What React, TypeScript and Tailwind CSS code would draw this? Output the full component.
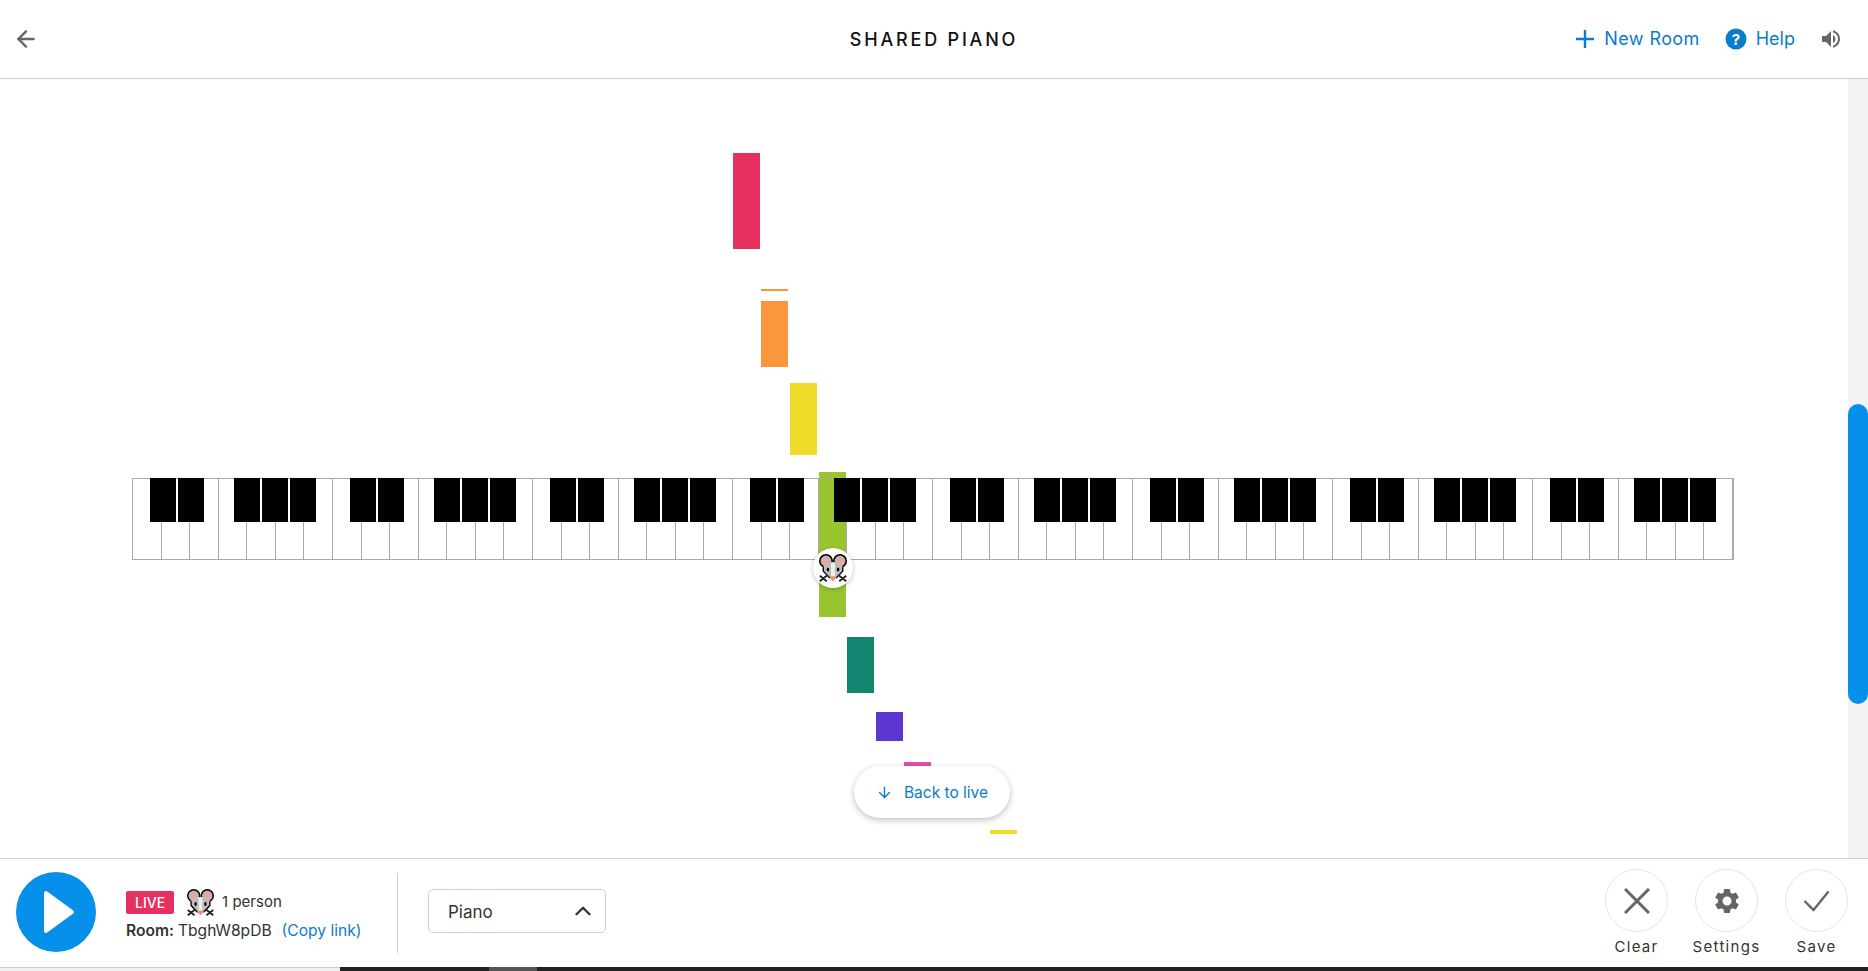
import { ArrowDown, ArrowLeft, ChevronUp } from 'lucide-react';

const octaves = [0, 1, 2, 3, 4, 5, 6, 7];
const whiteKeys = [0, 1, 2, 3, 4, 5, 6];

// left, top, height of each falling note on the roll
const notes = [
  { left: 733, top: 153, height: 96, color: 'bg-[#e6305f]' },
  { left: 761, top: 289, height: 2, color: 'bg-[#fb963c]' },
  { left: 761, top: 301, height: 66, color: 'bg-[#fb963c]' },
  { left: 790, top: 383, height: 72, color: 'bg-[#eedb2a]' },
  { left: 818.5, top: 472, height: 145, color: 'bg-[#98c52f]' },
  { left: 847, top: 637, height: 56, color: 'bg-[#118570]' },
  { left: 875.5, top: 712, height: 29, color: 'bg-[#5c36cf]' },
  { left: 904, top: 762, height: 5, color: 'bg-[#e54fae]' },
  { left: 990, top: 830, height: 4, color: 'bg-[#eedb2a]' },
];

const MouseFace = ({ size }: { size: number }) => (
  <svg width={size} height={size} viewBox="0 0 36 36">
    <path d="M1 28 L10 35 M1 35 L10 28 M35 28 L26 35 M35 35 L26 28" stroke="#222" strokeWidth="2.4" />
    <circle cx="9" cy="9" r="8" fill="#b5b5b5" stroke="#000" strokeWidth="2" />
    <circle cx="27" cy="9" r="8" fill="#b5b5b5" stroke="#000" strokeWidth="2" />
    <circle cx="8" cy="9" r="4.5" fill="#f4a39a" />
    <circle cx="28" cy="9" r="4.5" fill="#f4a39a" />
    <path d="M6 15 C8 9 28 9 30 15 L30 22 Q25 28 18 35 Q11 28 6 22 Z" fill="#bdbdbd" />
    <path d="M5.5 17 V22 Q11 28 14 31 M30.5 17 V22 Q25 28 22 31" fill="none" stroke="#000" strokeWidth="1.8" />
    <path d="M15.5 11 H20.5 L20.5 29 H15.5 Z" fill="#ededed" />
    <ellipse cx="11.5" cy="20" rx="1.6" ry="2.6" fill="#000" />
    <ellipse cx="24.5" cy="20" rx="1.6" ry="2.6" fill="#000" />
    <path d="M13 29 H23 L18 35 Z" fill="#f08a75" />
  </svg>
);

const Octave = () => (
  <div className="relative flex h-full w-[200.2px]">
    {whiteKeys.map(k => (
      <div key={k} className="flex-1 border-r border-[#aaaaaa] last:border-r-0" />
    ))}
    <div className="absolute left-[16.5px] -top-px flex gap-[2px]">
      <div className="h-[44px] w-[26px] bg-black" />
      <div className="h-[44px] w-[26px] bg-black" />
    </div>
    <div className="absolute left-[100.5px] -top-px flex gap-[2px]">
      <div className="h-[44px] w-[26px] bg-black" />
      <div className="h-[44px] w-[26px] bg-black" />
      <div className="h-[44px] w-[26px] bg-black" />
    </div>
  </div>
);

const RoundAction = ({ label, children }: { label: string; children: React.ReactNode }) => (
  <div className="flex w-[90px] flex-col items-center">
    <div className="flex h-[63px] w-[63px] items-center justify-center rounded-full border border-[#e5e5e5] text-[#666666]">
      {children}
    </div>
    <span className="mt-[5px] text-[15px] leading-[20px] tracking-[1.3px] text-[#333333]">{label}</span>
  </div>
);

export default function App() {
  return (
    <div className="flex h-[971px] w-[1868px] flex-col overflow-hidden bg-white font-['Inter','Liberation_Sans',sans-serif]">
      <header className="relative flex h-[79px] shrink-0 items-center justify-between border-b border-[#cccccc] pl-[13px] pr-[25px]">
        <ArrowLeft size={26} strokeWidth={2.2} className="text-[#666666]" />
        <h1 className="absolute left-1/2 -translate-x-1/2 text-[18px] font-medium tracking-[2.8px] text-[#111111]">
          SHARED PIANO
        </h1>
        <div className="flex items-center pb-px text-[#0a7cc9]">
          <svg width="18" height="18" viewBox="0 0 18 18">
            <path d="M9 0 V18 M0 9 H18" stroke="#0a7cc9" strokeWidth="2.4" />
          </svg>
          <span className="ml-[10px] text-[18px] tracking-[0.4px]">New Room</span>
          <svg width="22" height="22" viewBox="0 0 22 22" className="ml-[25px]">
            <circle cx="11" cy="11" r="10.5" fill="#0a7cc9" />
            <text x="11" y="16.5" textAnchor="middle" fontSize="15" fontWeight="700" fill="#fff">?</text>
          </svg>
          <span className="ml-[9px] text-[18px]">Help</span>
          <svg width="24" height="24" viewBox="0 0 24 24" fill="#666666" className="ml-[24px]">
            <path d="M3 9v6h4l5 5V4L7 9H3zm13.5 3c0-1.77-1.02-3.29-2.5-4.03v8.05c1.48-.73 2.5-2.25 2.5-4.02zM14 3.23v2.06c2.89.86 5 3.54 5 6.71s-2.11 5.85-5 6.71v2.06c4.01-.91 7-4.49 7-8.77s-2.99-7.86-7-8.77z" />
          </svg>
        </div>
      </header>

      <div className="flex min-h-0 flex-1">
        <main className="relative flex-1 overflow-hidden">
          {notes.map(n => (
            <div
              key={n.top}
              className={`absolute w-[27px] ${n.color}`}
              style={{ left: n.left, top: n.top - 79, height: n.height }}
            />
          ))}
          <div className="absolute left-[132px] top-[399px] flex h-[82px] w-[1602px] border border-[#aaaaaa]">
            {octaves.map(o => (
              <Octave key={o} />
            ))}
          </div>
          <div className="absolute left-[813px] top-[469px] flex h-[40px] w-[40px] items-center justify-center rounded-full bg-white shadow-[0_1px_4px_rgba(0,0,0,0.25)]">
            <MouseFace size={28} />
          </div>
          <button className="absolute left-[854px] top-[687px] flex h-[52px] w-[156px] items-center justify-center gap-[11px] rounded-full bg-white pt-px text-[15.5px] text-[#0a7cc9] shadow-[0_2px_6px_rgba(0,0,0,0.25)]">
            <ArrowDown size={17} />
            Back to live
          </button>
        </main>
        <div className="w-[20px] shrink-0 bg-[#f3f3f3] pt-[325px]">
          <div className="h-[300px] rounded-[10px] bg-[#0790ea]" />
        </div>
      </div>

      <footer className="flex h-[109px] shrink-0 items-center border-t border-[#cccccc] pb-[2px] pl-[16px] pr-[6.5px]">
        <div className="flex h-[80px] w-[80px] items-center justify-center rounded-full bg-[#0790ea]">
          <svg width="32" height="44" viewBox="0 0 32 44" className="ml-[6px]">
            <path d="M3 3 L29 22 L3 41 Z" fill="#fff" stroke="#fff" strokeWidth="4" strokeLinejoin="round" />
          </svg>
        </div>
        <div className="ml-[30px] mt-[7px] flex w-[271px] flex-col gap-[3px] text-[15px] text-[#333333]">
          <div className="flex items-center">
            <span className="rounded-[2px] bg-[#e6305f] px-[9px] text-[14px] font-medium leading-[23px] text-white">LIVE</span>
            <span className="ml-[13px]">
              <MouseFace size={27} />
            </span>
            <span className="ml-[8px]">1 person</span>
          </div>
          <div className="flex items-center text-[15.6px]">
            <span className="font-semibold">Room:</span>
            <span className="ml-[4px]">TbghW8pDB</span>
            <span className="ml-[10px] text-[#0a7cc9]">(Copy link)</span>
          </div>
        </div>
        <div className="mt-[2px] h-[80px] w-px bg-[#cccccc]" />
        <div className="mb-[2px] ml-[30px] flex h-[44px] w-[178px] items-center justify-between rounded-[5px] border border-[#cccccc] pl-[19px] pr-[9px] text-[17px] text-[#333333]">
          <span className="pt-[3px]">Piano</span>
          <ChevronUp size={26} strokeWidth={2.2} />
        </div>
        <div className="ml-auto mt-[2px] flex">
          <RoundAction label="Clear">
            <svg width="26" height="26" viewBox="0 0 26 26">
              <path d="M1 1 L25 25 M25 1 L1 25" stroke="#666666" strokeWidth="3" />
            </svg>
          </RoundAction>
          <RoundAction label="Settings">
            <svg width="30" height="30" viewBox="0 0 24 24" fill="#666666">
              <path d="M19.14 12.94c.04-.3.06-.61.06-.94 0-.32-.02-.64-.07-.94l2.03-1.58c.18-.14.23-.41.12-.61l-1.92-3.32c-.12-.22-.37-.29-.59-.22l-2.39.96c-.5-.38-1.03-.7-1.62-.94l-.36-2.54c-.04-.24-.24-.41-.48-.41h-3.84c-.24 0-.43.17-.47.41l-.36 2.54c-.59.24-1.13.57-1.62.94l-2.39-.96c-.22-.08-.47 0-.59.22L2.74 8.87c-.12.21-.08.47.12.61l2.03 1.58c-.05.3-.09.63-.09.94s.02.64.07.94l-2.03 1.58c-.18.14-.23.41-.12.61l1.92 3.32c.12.22.37.29.59.22l2.39-.96c.5.38 1.03.7 1.62.94l.36 2.54c.05.24.24.41.48.41h3.84c.24 0 .44-.17.47-.41l.36-2.54c.59-.24 1.13-.56 1.62-.94l2.39.96c.22.08.47 0 .59-.22l1.92-3.32c.12-.22.07-.47-.12-.61l-2.01-1.58zM12 15.6c-1.98 0-3.6-1.62-3.6-3.6s1.62-3.6 3.6-3.6 3.6 1.62 3.6 3.6-1.62 3.6-3.6 3.6z" />
            </svg>
          </RoundAction>
          <RoundAction label="Save">
            <svg width="27" height="22" viewBox="0 0 27 22">
              <path d="M1.5 11 L10.5 20 L25.5 1.5" fill="none" stroke="#666666" strokeWidth="2.4" />
            </svg>
          </RoundAction>
        </div>
      </footer>

      <div className="flex h-[4px] shrink-0">
        <div className="w-[340px] border-t border-[#cccccc] bg-[#f0f0f0]" />
        <div className="w-[149px] bg-[#222222]" />
        <div className="w-[48px] bg-[#555555]" />
        <div className="flex-1 bg-[#222222]" />
      </div>
    </div>
  );
}
